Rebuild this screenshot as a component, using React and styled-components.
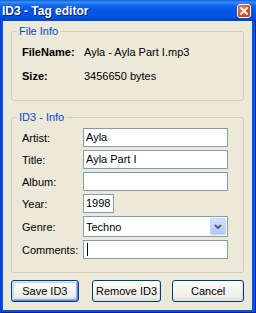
import React from "react";
import styled, { createGlobalStyle } from "styled-components";

const Global = createGlobalStyle`
  html, body { margin: 0; padding: 0; background: #ffffff; }
  body { width: 256px; height: 313px; overflow: hidden; }
  * { box-sizing: border-box; }
`;

const UI_FONT = `"Liberation Sans", Arial, sans-serif`;

const Window = styled.div`
  width: 256px;
  height: 313px;
  display: flex;
  flex-direction: column;
  background: #0055e5;
  box-shadow: inset 1px 0 0 #0831d9, inset -1px 0 0 #001ea0, inset 0 -1px 0 #001ea0;
  font-family: ${UI_FONT};
  font-size: 11px;
  color: #000;
`;

const TitleBar = styled.div`
  height: 21px;
  flex: none;
  display: flex;
  align-items: center;
  justify-content: space-between;
  padding: 1px 5px 0 2px;
  background: linear-gradient(
    to bottom,
    #0a5fda 0%,
    #3d8ff5 10%,
    #1a6df0 22%,
    #0058e6 45%,
    #0055e3 75%,
    #004bd6 92%,
    #0040c0 100%
  );
`;

const Title = styled.span`
  color: #ffffff;
  font-weight: bold;
  font-size: 12px;
  text-shadow: 1px 1px 0 #0a1c8a;
  white-space: nowrap;
`;

const CloseButton = styled.div`
  width: 14px;
  height: 14px;
  border: 1px solid #ffffff;
  border-radius: 3px;
  background: radial-gradient(circle at 35% 30%, #f0896a 0%, #e0522a 45%, #c43b10 100%);
  display: flex;
  align-items: center;
  justify-content: center;
`;

const Client = styled.div`
  flex: 1;
  margin: 0 4px 3px 3px;
  background: #ece9d8;
  display: flex;
  flex-direction: column;
  padding: 4px 8px 8px;
`;

const Group = styled.fieldset`
  margin: ${(p) => p.$top}px 0 0;
  padding: ${(p) => p.$pad};
  border: 1px solid #d0d0bf;
  border-radius: 3px;
  min-width: 0;
`;

const Legend = styled.legend`
  color: #0046d5;
  font-size: 11px;
  line-height: 13px;
  padding: 0 2px;
  margin-left: -5px;
`;

const InfoGrid = styled.div`
  display: grid;
  grid-template-columns: 62px 1fr;
  grid-auto-rows: 24px;
  align-items: center;
`;

const InfoLabel = styled.span`
  font-weight: bold;
`;

const InfoValue = styled.span`
  white-space: nowrap;
`;

const FormGrid = styled.div`
  display: grid;
  grid-template-columns: 61px auto;
  row-gap: 3px;
  align-items: center;
  justify-items: start;
`;

const FieldLabel = styled.span`
  white-space: nowrap;
`;

const TextBox = styled.div`
  width: ${(p) => p.$w}px;
  height: 19px;
  border: 1px solid #7f9db9;
  background: #ffffff;
  padding: 0 2px;
  line-height: 17px;
  white-space: nowrap;
  overflow: hidden;
  display: flex;
  align-items: center;
`;

const Caret = styled.span`
  display: inline-block;
  width: 1px;
  height: 13px;
  background: #000;
  margin-left: 1px;
`;

const Select = styled.div`
  width: 145px;
  height: 21px;
  border: 1px solid #7f9db9;
  background: #ffffff;
  display: flex;
  align-items: center;
  justify-content: space-between;
  padding: 0 1px 0 2px;
`;

const DropButton = styled.div`
  width: 16px;
  height: 17px;
  border: 1px solid #c3d3fd;
  border-radius: 2px;
  background: linear-gradient(to bottom, #d6e1fc 0%, #c1d3fb 50%, #b4c8f6 100%);
  display: flex;
  align-items: center;
  justify-content: center;
`;

const ButtonRow = styled.div`
  display: flex;
  margin-top: 7px;
`;

const Button = styled.div`
  width: ${(p) => p.$w}px;
  margin-left: ${(p) => p.$ml}px;
  height: 22px;
  border: 1px solid #003c74;
  border-radius: 3px;
  background: linear-gradient(to bottom, #ffffff 0%, #f6f6f2 35%, #eeede7 80%, #dcd8cc 100%);
  display: flex;
  align-items: center;
  justify-content: center;
  white-space: nowrap;
  box-shadow: ${(p) =>
    p.$default
      ? "inset 1px 1px 0 #cee7ff, inset -1px -1px 0 #6982ee, inset 2px 2px 0 #bcd4f6, inset -2px -2px 0 #89ade4"
      : "inset -1px -1px 0 #e3ded1"};
`;

export default function App() {
  return (
    <>
      <Global />
      <Window>
        <TitleBar>
          <Title>ID3 - Tag editor</Title>
          <CloseButton>
            <svg width="8" height="8" viewBox="0 0 8 8">
              <path d="M1 1 L7 7 M7 1 L1 7" stroke="#ffffff" strokeWidth="1.8" strokeLinecap="square" />
            </svg>
          </CloseButton>
        </TitleBar>
        <Client>
          <Group $top={0} $pad="2px 10px 12px">
            <Legend>File Info</Legend>
            <InfoGrid>
              <InfoLabel>FileName:</InfoLabel>
              <InfoValue>Ayla - Ayla Part I.mp3</InfoValue>
              <InfoLabel>Size:</InfoLabel>
              <InfoValue>3456650 bytes</InfoValue>
            </InfoGrid>
          </Group>
          <Group $top={10} $pad="4px 10px 13px">
            <Legend>ID3 - Info</Legend>
            <FormGrid>
              <FieldLabel>Artist:</FieldLabel>
              <TextBox $w={145}>Ayla</TextBox>
              <FieldLabel>Title:</FieldLabel>
              <TextBox $w={145}>Ayla Part I</TextBox>
              <FieldLabel>Album:</FieldLabel>
              <TextBox $w={145} />
              <FieldLabel>Year:</FieldLabel>
              <TextBox $w={31}>1998</TextBox>
              <FieldLabel>Genre:</FieldLabel>
              <Select>
                <span>Techno</span>
                <DropButton>
                  <svg width="8" height="6" viewBox="0 0 8 6">
                    <path d="M1 1 L4 4 L7 1" fill="none" stroke="#4d6185" strokeWidth="2" />
                  </svg>
                </DropButton>
              </Select>
              <FieldLabel>Comments:</FieldLabel>
              <TextBox $w={145}>
                <Caret />
              </TextBox>
            </FormGrid>
          </Group>
          <ButtonRow>
            <Button $w={68} $ml={0} $default>Save ID3</Button>
            <Button $w={70} $ml={13}>Remove ID3</Button>
            <Button $w={72} $ml={11}>Cancel</Button>
          </ButtonRow>
        </Client>
      </Window>
    </>
  );
}
